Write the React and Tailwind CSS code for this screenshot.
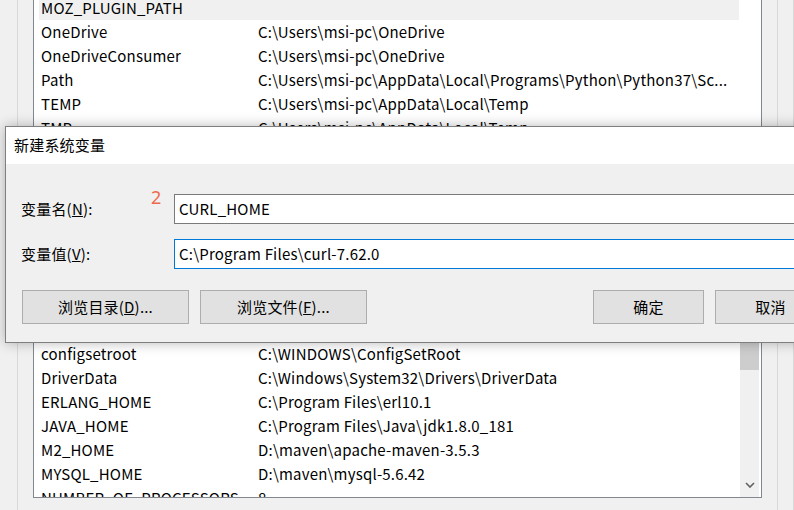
import React from "react";

const upperRows = [
  { name: "MOZ_PLUGIN_PATH", value: "", selected: true },
  { name: "OneDrive", value: "C:\\Users\\msi-pc\\OneDrive" },
  { name: "OneDriveConsumer", value: "C:\\Users\\msi-pc\\OneDrive" },
  { name: "Path", value: "C:\\Users\\msi-pc\\AppData\\Local\\Programs\\Python\\Python37\\Sc..." },
  { name: "TEMP", value: "C:\\Users\\msi-pc\\AppData\\Local\\Temp" },
  { name: "TMP", value: "C:\\Users\\msi-pc\\AppData\\Local\\Temp" },
];

const lowerRows = [
  { name: "configsetroot", value: "C:\\WINDOWS\\ConfigSetRoot" },
  { name: "DriverData", value: "C:\\Windows\\System32\\Drivers\\DriverData" },
  { name: "ERLANG_HOME", value: "C:\\Program Files\\erl10.1" },
  { name: "JAVA_HOME", value: "C:\\Program Files\\Java\\jdk1.8.0_181" },
  { name: "M2_HOME", value: "D:\\maven\\apache-maven-3.5.3" },
  { name: "MYSQL_HOME", value: "D:\\maven\\mysql-5.6.42" },
  { name: "NUMBER_OF_PROCESSORS", value: "8" },
];

function Row({ name, value, selected }) {
  return (
    <div
      className={`flex h-[24px] shrink-0 items-center ml-[5px] w-[700px] px-[2px] leading-[24px] tracking-[0.2px] ${
        selected ? "bg-[#f0f0f0]" : ""
      }`}
    >
      <div className="w-[217px] shrink-0 whitespace-nowrap">{name}</div>
      <div className="whitespace-nowrap overflow-hidden">{value}</div>
    </div>
  );
}

function Btn({ children, className = "" }) {
  return (
    <div
      className={`h-[34px] shrink-0 flex items-center justify-center bg-[#e1e1e1] border border-[#adadad] ${className}`}
    >
      {children}
    </div>
  );
}

export default function App() {
  return (
    <div className="relative w-[794px] h-[510px] overflow-hidden bg-[#f0f0f0] text-black text-[15px] font-['Noto_Sans_CJK_SC','Noto_Sans',sans-serif]">
      {/* underlying window */}
      <div className="flex h-full">
        <div className="w-[17px] shrink-0" />
        <div className="w-[16px] shrink-0 border-l border-[#d9d9d9]" />
        <div className="w-[729px] shrink-0 flex flex-col">
          <div className="h-[498px] bg-white border-x border-b border-[#828790] flex flex-col">
            <div className="h-[342px] shrink-0 overflow-hidden flex flex-col">
              <div className="mt-[-4px]" />
              {upperRows.map((r) => (
                <Row key={r.name} {...r} />
              ))}
            </div>
            <div className="h-[155px] shrink-0 flex overflow-hidden">
              <div className="w-[706px] shrink-0 flex flex-col overflow-hidden">
                {lowerRows.map((r) => (
                  <Row key={r.name} {...r} />
                ))}
              </div>
              <div className="w-[19px] shrink-0 bg-[#f0f0f0] flex flex-col">
                <div className="h-[28px] bg-[#cdcdcd]" />
                <div className="flex-1" />
                <div className="h-[20px] flex items-center justify-center pb-[4px]">
                  <svg width="10" height="6" viewBox="0 0 10 6">
                    <polyline points="1,1 5,5 9,1" fill="none" stroke="#606060" strokeWidth="1.6" />
                  </svg>
                </div>
              </div>
              <div className="w-[2px] shrink-0" />
            </div>
          </div>
        </div>
        <div className="w-[15px] shrink-0" />
        <div className="w-[16px] shrink-0 border-l border-[#d9d9d9]" />
        <div className="flex-1 border-l border-[#d9d9d9]" />
      </div>

      {/* dialog window */}
      <div className="absolute left-[5px] top-[126px] w-[840px] border border-[#7f7f7f] bg-[#f0f0f0] shadow-[0_0_12px_rgba(0,0,0,0.28)] tracking-[0.2px]">
        <div className="h-[37px] bg-white flex items-center pl-[8px]">新建系统变量</div>
        <div className="pt-[30px] pb-[18px]">
          <div className="flex items-center h-[30px]">
            <div className="w-[168px] shrink-0 pl-[15px]">
              变量名(<span className="underline">N</span>):
            </div>
            <div className="w-[660px] h-[30px] shrink-0 bg-white border border-[#7a7a7a] flex items-center pl-[4px]">
              CURL_HOME
            </div>
          </div>
          <div className="flex items-center h-[30px] mt-[15px]">
            <div className="w-[168px] shrink-0 pl-[15px]">
              变量值(<span className="underline">V</span>):
            </div>
            <div className="w-[660px] h-[30px] shrink-0 bg-white border border-[#0078d7] flex items-center pl-[4px]">
              C:\Program Files\curl-7.62.0
            </div>
          </div>
          <div className="flex mt-[21px] pl-[16px]">
            <Btn className="w-[167px]">
              浏览目录(<span className="underline">D</span>)...
            </Btn>
            <Btn className="w-[167px] ml-[11px]">
              浏览文件(<span className="underline">F</span>)...
            </Btn>
            <Btn className="w-[111px] ml-[226px]">确定</Btn>
            <Btn className="w-[111px] ml-[11px]">取消</Btn>
          </div>
        </div>
      </div>

      {/* annotation */}
      <div className="absolute left-[151px] top-[188px] text-[18px] leading-none text-[#ee6a4a] font-['Noto_Sans',sans-serif]">
        2
      </div>
    </div>
  );
}
